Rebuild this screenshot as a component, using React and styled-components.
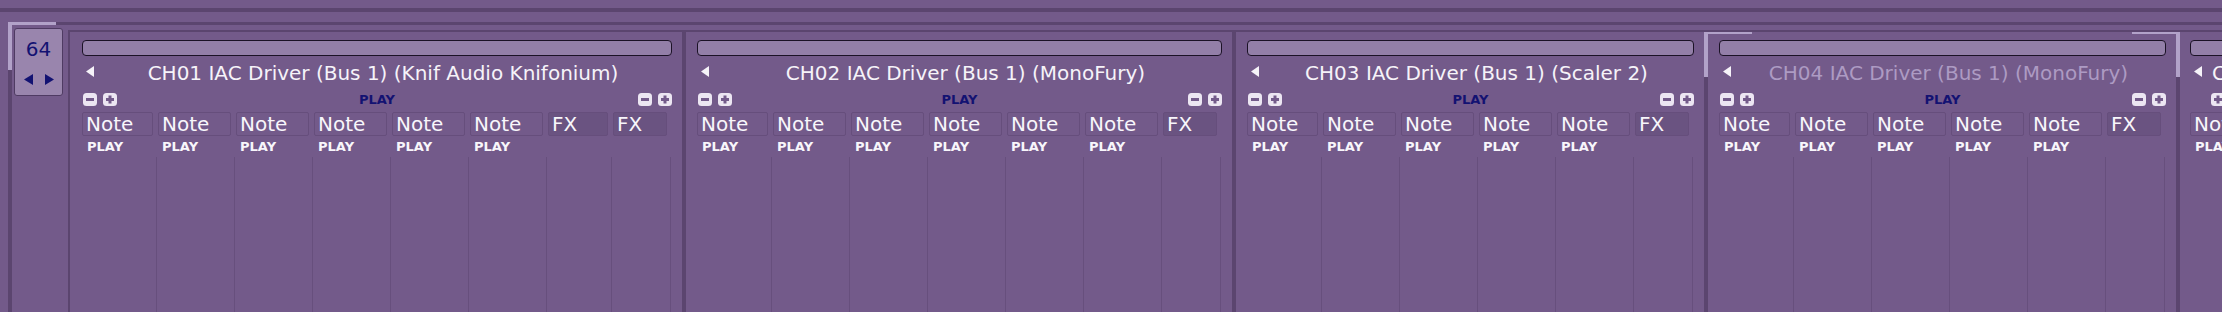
import React from "react";
import styled, { createGlobalStyle } from "styled-components";

const BG = "#735a8a";
const DARK = "#5b456f";
const LIGHT = "#b2a2c9";
const NAVY = "#131272";

const tracks = [
  { name: "CH01 IAC Driver (Bus 1) (Knif Audio Knifonium)", notes: 6, fx: [60, 54], width: 616, pl: 12 },
  { name: "CH02 IAC Driver (Bus 1) (MonoFury)", notes: 6, fx: [54], width: 550, pl: 11 },
  { name: "CH03 IAC Driver (Bus 1) (Scaler 2)", notes: 5, fx: [54], width: 472, pl: 11 },
  { name: "CH04 IAC Driver (Bus 1) (MonoFury)", notes: 5, fx: [54], width: 472, pl: 11, selected: true },
  { name: "CH05 IAC Driver (Bus 1) (Serum)", notes: 1, fx: [], width: 110, pl: 10, single: true },
];

const GlobalStyle = createGlobalStyle`
  html, body { margin: 0; padding: 0; background: ${BG}; }
  body { font-family: "DejaVu Sans", "Noto Sans", sans-serif; overflow: hidden; }
`;

const Page = styled.div`
  width: 2222px;
  height: 312px;
  overflow: hidden;
  display: flex;
  flex-direction: column;
  background: ${BG};
`;

const TopRule = styled.div`
  flex-shrink: 0;
  margin-top: 8px;
  height: 4px;
  background: ${DARK};
`;

const Body = styled.div`
  position: relative;
  flex: 1;
  min-height: 0;
  display: flex;
  margin: 10px 0 0 8px;
  border-top: 3px solid ${DARK};
  border-left: 4px solid ${DARK};
`;

// focus corners drawn over the frame edges
const Corner = styled.div`
  position: absolute;
  top: ${p => p.$top}px;
  ${p => p.$side}: -4px;
  width: 48px;
  height: ${p => p.$h}px;
  box-sizing: border-box;
  border-top: ${p => p.$t}px solid ${LIGHT};
  border-${p => p.$side}: 4px solid ${LIGHT};
  pointer-events: none;
  z-index: 2;
`;

const Gutter = styled.div`
  flex-shrink: 0;
  width: 56px;
  padding: 3px 0 0 2px;
  box-sizing: border-box;
`;

const ZoomBox = styled.div`
  width: 49px;
  height: 68px;
  box-sizing: border-box;
  padding-top: 8px;
  border: 1px solid #4f3b63;
  border-radius: 3px;
  background: #9985ad;
  display: flex;
  flex-direction: column;
  align-items: center;
`;

const ZoomValue = styled.div`
  font-size: 20px;
  line-height: 24px;
  color: ${NAVY};
`;

const ZoomArrows = styled.div`
  display: flex;
  gap: 12px;
  margin-top: 13px;
`;

const Tracks = styled.div`
  flex: 1;
  min-width: 0;
  display: flex;
  margin-top: 5px;
  border-top: 2px solid ${DARK};
  border-left: 2px solid ${DARK};
  overflow: hidden;
`;

const Panel = styled.div`
  position: relative;
  flex-shrink: 0;
  width: ${p => p.$w}px;
  box-sizing: border-box;
  padding: 8px 10px 0 ${p => p.$pl}px;
  border-right: 4px solid ${DARK};
  display: flex;
  flex-direction: column;
`;

const Bar = styled.div`
  height: 16px;
  box-sizing: border-box;
  border: 1px solid #1b1226;
  border-radius: 4px;
  background: #937fa8;
`;

const TitleRow = styled.div`
  display: flex;
  align-items: center;
  height: 34px;
`;

const BackArrow = styled.svg`
  flex-shrink: 0;
  margin: 0 0 3px 4px;
`;

const Title = styled.div`
  flex: 1;
  min-width: 0;
  display: flex;
  justify-content: safe center;
  padding: 0 10px;
  white-space: nowrap;
  font-size: 20px;
  line-height: 34px;
  color: ${p => (p.$dim ? "#ad9bc3" : "#f6f3f9")};
`;

const ControlRow = styled.div`
  display: grid;
  grid-template-columns: 1fr auto 1fr;
  align-items: center;
  height: 13px;
  margin-top: 3px;
`;

const BtnPair = styled.div`
  display: flex;
  gap: 6px;
  justify-self: ${p => (p.$end ? "end" : "start")};
  margin-left: ${p => (p.$end ? 0 : 1)}px;
`;

const StepSvg = styled.svg`
  display: block;
  visibility: ${p => (p.$hidden ? "hidden" : "visible")};
`;

const PlayTag = styled.div`
  font-size: 13px;
  font-weight: bold;
  line-height: 13px;
  color: ${p => p.$color};
  white-space: nowrap;
`;

const Columns = styled.div`
  flex: 1;
  display: flex;
  margin-top: 6px;
`;

const Column = styled.div`
  flex-shrink: 0;
  width: ${p => p.$w}px;
  display: flex;
  flex-direction: column;
`;

const Cell = styled.div`
  width: ${p => p.$w}px;
  height: 24px;
  margin-left: ${p => p.$ml}px;
  box-sizing: border-box;
  padding-left: 3px;
  border: 1px solid #664e7c;
  border-radius: 2px;
  background: ${p => (p.$fx ? "#6a5381" : "transparent")};
  font-size: 20px;
  line-height: 22px;
  color: #f8f6fb;
  overflow: hidden;
  white-space: nowrap;
`;

const Label = styled(PlayTag)`
  height: 14px;
  line-height: 14px;
  margin-top: 4px;
  padding-left: 5px;
`;

const Lane = styled.div`
  flex: 1;
  margin-top: 3px;
  border-right: 1px solid #674f7d;
`;

const Tri = ({ dir, color, w, h }) => (
  <svg width={w} height={h} viewBox={`0 0 ${w} ${h}`}>
    <polygon
      points={dir === "left" ? `${w},0 ${w},${h} 0,${h / 2}` : `0,0 0,${h} ${w},${h / 2}`}
      fill={color}
    />
  </svg>
);

const StepButton = ({ plus, hidden }) => (
  <StepSvg width="14" height="13" viewBox="0 0 14 13" $hidden={hidden}>
    <rect x="0" y="0" width="14" height="13" rx="3.5" fill="#ece6f2" />
    <rect x="3" y="5" width="8" height="3" fill={BG} />
    {plus && <rect x="5.5" y="2.5" width="3" height="8" fill={BG} />}
  </StepSvg>
);

const Track = ({ track }) => {
  const cols = [];
  for (let i = 0; i < track.notes; i++) {
    cols.push({ kind: "note", w: i === 0 ? 75 : 78, cell: i === 0 ? 71 : 73, ml: i === 0 ? 0 : 1 });
  }
  track.fx.forEach(w => cols.push({ kind: "fx", w: w + 5, cell: w, ml: 1 }));

  return (
    <Panel $w={track.width} $pl={track.pl}>
      {track.selected && (
        <>
          <Corner $side="left" $top={-2} $h={47} $t={4} />
          <Corner $side="right" $top={-2} $h={47} $t={4} />
        </>
      )}
      <Bar />
      <TitleRow>
        <BackArrow width="8" height="11" viewBox="0 0 8 11">
          <polygon points="8,0 8,11 0,5.5" fill="#f6f3f9" />
        </BackArrow>
        <Title $dim={track.selected}>{track.name}</Title>
      </TitleRow>
      <ControlRow>
        <BtnPair>
          <StepButton hidden={track.single} />
          <StepButton plus />
        </BtnPair>
        <PlayTag $color={NAVY}>PLAY</PlayTag>
        {track.fx.length > 0 ? (
          <BtnPair $end>
            <StepButton />
            <StepButton plus />
          </BtnPair>
        ) : (
          <span />
        )}
      </ControlRow>
      <Columns>
        {cols.map((c, i) => (
          <Column key={i} $w={c.w}>
            <Cell $w={c.cell} $ml={c.ml} $fx={c.kind === "fx"}>
              {c.kind === "fx" ? "FX" : "Note"}
            </Cell>
            <Label $color="#f8f6fb">{c.kind === "note" ? "PLAY" : ""}</Label>
            <Lane />
          </Column>
        ))}
      </Columns>
    </Panel>
  );
};

const App = () => {
  return (
    <Page>
      <GlobalStyle />
      <TopRule />
      <Body>
        <Corner $side="left" $top={-3} $h={48} $t={3} />
        <Gutter>
          <ZoomBox>
            <ZoomValue>64</ZoomValue>
            <ZoomArrows>
              <Tri dir="left" color={NAVY} w={9} h={11} />
              <Tri dir="right" color={NAVY} w={9} h={11} />
            </ZoomArrows>
          </ZoomBox>
        </Gutter>
        <Tracks>
          {tracks.map(t => (
            <Track key={t.name} track={t} />
          ))}
        </Tracks>
      </Body>
    </Page>
  );
};

export default App;
